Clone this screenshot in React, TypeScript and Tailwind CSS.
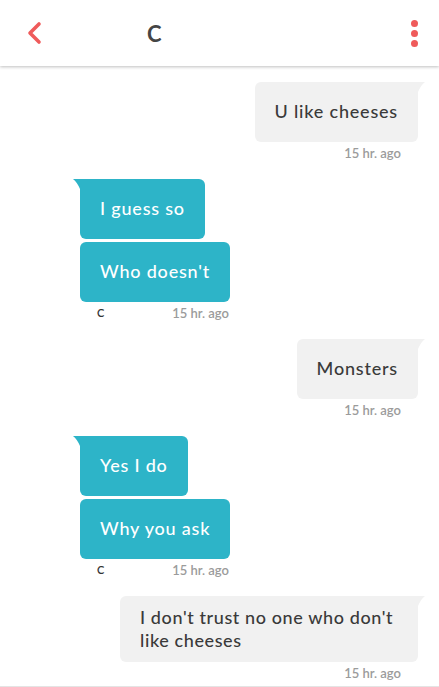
import React from "react";

const TEAL = "#2db4c8";

type Msg = { side: "in" | "out"; texts: string[]; wide?: boolean };

const groups: Msg[] = [
  { side: "out", texts: ["U like cheeses"] },
  { side: "in", texts: ["I guess so", "Who doesn't"] },
  { side: "out", texts: ["Monsters"] },
  { side: "in", texts: ["Yes I do", "Why you ask"] },
  { side: "out", texts: ["I don't trust no one who don't like cheeses"], wide: true },
];

function Tail({ side }: { side: "in" | "out" }) {
  if (side === "out") {
    return (
      <svg className="absolute top-0 left-full" width="7" height="10" viewBox="0 0 7 10">
        <path d="M0 0 H7 Q3 3 0 10 Z" fill="#f1f1f1" />
      </svg>
    );
  }
  return (
    <svg className="absolute top-0 right-full" width="7" height="10" viewBox="0 0 7 10">
      <path d="M7 0 H0 Q4 3 7 10 Z" fill={TEAL} />
    </svg>
  );
}

function Bubble({ side, text, first, wide }: { side: "in" | "out"; text: string; first: boolean; wide?: boolean }) {
  const base = "relative rounded-[6px] px-5 text-[18px] leading-[23px] font-medium";
  const cls =
    side === "out"
      ? `${base} bg-[#f1f1f1] text-[#3a3a3a] ${first ? "rounded-tr-none" : ""}`
      : `${base} bg-[#2db4c8] text-white ${first ? "rounded-tl-none" : ""}`;
  return (
    <div
      className={`${cls} ${
        wide ? "max-w-[298px] py-[10px] tracking-[0.6px]" : "h-[60px] py-[18px] whitespace-nowrap tracking-[0.8px]"
      }`}
    >
      {first && <Tail side={side} />}
      {text}
    </div>
  );
}

function Group({ m }: { m: Msg }) {
  if (m.side === "out") {
    return (
      <div className="flex flex-col items-end pr-[21px]">
        <Bubble side="out" text={m.texts[0]} first wide={m.wide} />
        <div className="mt-[3px] h-4 pr-[17px] text-[13px] leading-4 font-semibold text-[#9b9b9b]">15 hr. ago</div>
      </div>
    );
  }
  return (
    <div className="flex flex-col items-start pl-20">
      <div className="flex flex-col items-start gap-[3px]">
        {m.texts.map((t, i) => (
          <Bubble key={t} side="in" text={t} first={i === 0} />
        ))}
      </div>
      <div className="mt-[3px] flex h-4 w-[149px] items-center justify-between text-[13px] leading-4 font-semibold">
        <span className="pl-[17px] text-[11px] text-[#333]">C</span>
        <span className="text-[#9b9b9b]">15 hr. ago</span>
      </div>
    </div>
  );
}

export default function App() {
  return (
    <div className="flex h-[687px] w-[439px] flex-col overflow-hidden bg-white font-['Lato','Open_Sans',sans-serif]">
      <header className="relative z-10 flex h-[66px] shrink-0 items-center bg-white shadow-[0_1px_3px_rgba(0,0,0,0.25)]">
        <div className="flex w-[72px] items-center pl-[27px]">
          <svg width="16" height="24" viewBox="0 0 16 24">
            <path d="M12 3 L3 12 L12 21" fill="none" stroke="#ef5b5b" strokeWidth="3.6" strokeLinecap="round" strokeLinejoin="round" />
          </svg>
        </div>
        <div className="flex-1 pl-[75px] text-[22px] font-bold text-[#454545]">C</div>
        <div className="flex flex-col gap-[3px] pr-[21px]">
          <span className="h-[7px] w-[7px] rounded-full bg-[#ef5b5b]" />
          <span className="h-[7px] w-[7px] rounded-full bg-[#ef5b5b]" />
          <span className="h-[7px] w-[7px] rounded-full bg-[#ef5b5b]" />
        </div>
      </header>
      <main className="flex flex-1 flex-col gap-[18px] pt-4">
        {groups.map((g, i) => (
          <Group key={i} m={g} />
        ))}
      </main>
      <div className="h-px shrink-0 bg-[#e4e4e4]" />
    </div>
  );
}
